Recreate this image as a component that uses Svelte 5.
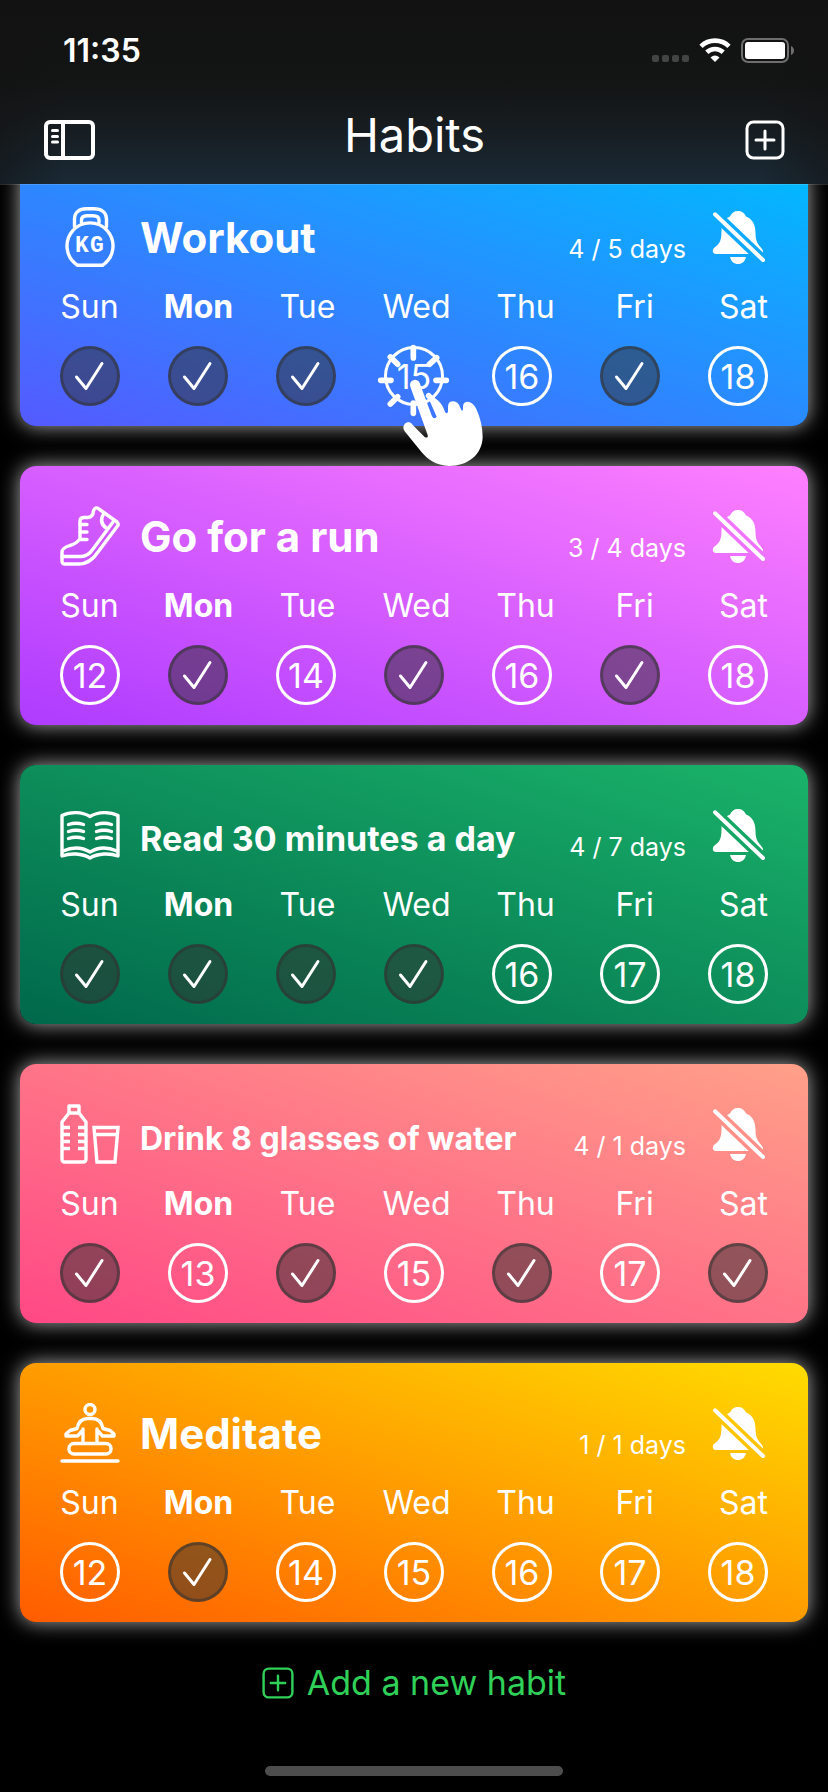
<script>
  const days = ['Sun', 'Mon', 'Tue', 'Wed', 'Thu', 'Fri', 'Sat'];
  const firstDate = 12;
  const today = 1;

  let habits = $state([
    { id: 'workout', name: 'Workout', size: 'large', count: '4 / 5 days', done: [true, true, true, false, false, true, false] },
    { id: 'run', name: 'Go for a run', size: 'large', count: '3 / 4 days', done: [false, true, false, true, false, true, false] },
    { id: 'read', name: 'Read 30 minutes a day', size: 'medium', count: '4 / 7 days', done: [true, true, true, true, false, false, false] },
    { id: 'water', name: 'Drink 8 glasses of water', size: 'small', count: '4 / 1 days', done: [true, false, true, false, true, false, true] },
    { id: 'meditate', name: 'Meditate', size: 'large', count: '1 / 1 days', done: [false, true, false, false, false, false, false] }
  ]);
</script>

{#snippet habitIcon(id)}
  <svg class="icon line" viewBox="0 0 60 60" aria-hidden="true">
    {#if id === 'workout'}
      <path d="M17.5 58.200A23 23 0 1 1 42.5 58.200Z" />
      <path d="M14.500 20V12C14.500 5 20 1.800 26 1.800H34C41 1.800 46.500 5 46.500 12V20" />
      <path d="M21.500 15.500V13C21.500 10 24 8.700 27 8.700H33C37 8.700 39 10 39 13V15.500" />
      <text x="15" y="45">K</text>
      <text x="30" y="45">G</text>
    {:else if id === 'run'}
      <path d="M39 3L57 16Q59 18 57.500 20L38 46Q30 58 19 58H5Q2 58 2 55V46Q2 42 10 39.500Q16 38 20 33V15Q20 11.500 24 11.500H28Q33 11 33.500 5Q35 0 39 3Z" />
      <path d="M53 16L33 43Q28 50.500 21 50.500H2M44 7Q38 17 47 22.500M20 18.500H27M20 26H27M20 33.500H27" />
    {:else if id === 'read'}
      <path d="M2 10.500C10 6.500 22 6.500 30 11.500C38 6.500 50 6.500 58 10.500V51C50 48 38 48 30 53C22 48 10 48 2 51Z" />
      <path d="M3 46C12 42 22 42 30 47C38 42 48 42 57 46" />
      <path d="M8.500 19.500Q16 17 23.500 19.500M8.500 26.500Q16 24 23.500 26.500M8.500 33.500Q16 31 23.500 33.500M36.500 19.500Q44 17 51.500 19.500M36.500 26.500Q44 24 51.500 26.500M36.500 33.500Q44 31 51.500 33.500" />
    {:else if id === 'water'}
      <path d="M9 9V2H19V9L26 18V55Q26 58 23 58H5Q2 58 2 55V18L9 9H19" />
      <path class="flat" d="M1 23.500H10M1 30.500H10M1 37.500H10M1 44.500H10M18 23.500H27M18 30.500H27M18 37.500H27M18 44.500H27" />
      <path class="flat" d="M34 23.500H58L55 58H37ZM35 30.500H57" />
    {:else}
      <circle cx="30" cy="6.500" r="5" />
      <path d="M23 26V39M37 26V39M22 28L17.500 33H6V31L10 27.500L17 25.500Q19 15.500 28 15.500H32Q41 15.500 43 25.500L50 27.500L54 31V33H42.500L38 28" />
      <rect x="9" y="40.500" width="42" height="10.500" rx="5" />
      <path d="M2 58H58" />
    {/if}
  </svg>
{/snippet}

{#snippet plusBox(cls)}
  <svg class={cls} viewBox="0 0 40 40" aria-hidden="true">
    <rect x="2" y="2" width="36" height="36" rx="6.500" />
    <path d="M20 11V29M11 20H29" />
  </svg>
{/snippet}

<div class="page">
  <header>
    <div class="status">
      <time>11:35</time>
      <div class="signals">
        <span class="dots"><i></i><i></i><i></i><i></i></span>
        <svg class="wifi" viewBox="0 0 32 24" aria-label="Wi-Fi" role="img">
          <path d="M2 8.300A20 20 0 0 1 30 8.300M7.800 14.200A12 12 0 0 1 24.200 14.200" fill="none" stroke="#fff" stroke-width="4.600" />
          <path d="M16 24L11.500 19.500Q16 15.500 20.500 19.500Z" fill="#fff" />
        </svg>
        <svg class="battery" viewBox="0 0 54 26" aria-label="Battery full" role="img">
          <rect x="1" y="1" width="46" height="23" rx="6" fill="none" stroke="#6e6e6f" stroke-width="2" />
          <rect x="4" y="4" width="40" height="17" rx="3" fill="#fff" />
          <path d="M50 8V17Q53 15.500 53 12.500Q53 9.500 50 8Z" fill="#6e6e6f" />
        </svg>
      </div>
    </div>
    <nav>
      <button class="bare" aria-label="Toggle sidebar">
        <svg class="sidebar" viewBox="0 0 52 40" aria-hidden="true">
          <rect x="2" y="2" width="47" height="36" rx="4" stroke-width="4" />
          <path d="M19 2V38" stroke-width="4" />
          <path d="M8.500 10.500H13.500M8.500 16.500H13.500M8.500 22H13.500" stroke-width="3" stroke-linecap="round" />
        </svg>
      </button>
      <h1>Habits</h1>
      <button class="bare end" aria-label="New habit">{@render plusBox('plus')}</button>
    </nav>
  </header>

  <main>
    {#each habits as habit, h}
      <article class={habit.id}>
        <div class="head">
          {@render habitIcon(habit.id)}
          <h2><span class={habit.size}>{habit.name}</span></h2>
          <p>{habit.count}</p>
          <button class="bare" aria-label="Reminders off">
            <svg class="icon" viewBox="0 0 60 60" aria-hidden="true">
              <mask id="cut-{h}">
                <rect width="60" height="60" fill="#fff" />
                <path d="M-4 -3.200L64 61.600" stroke="#000" stroke-width="11" />
              </mask>
              <g fill="#fff" mask="url(#cut-{h})">
                <path d="M30 4C34 4 36.500 6 38 9.500C44 12 47.500 17 47.500 26C47.500 36 51 38 54 42C56 45 55 47 53 47H8C4.500 47 4 43 6 41C11 37 13.500 35 13.500 24C13.500 16 16 12 22 9.500C23.500 6 26 4 30 4Z" />
              </g>
              <path d="M22 50H38C37 54.500 34 57 30 57S23 54.500 22 50Z" fill="#fff" />
              <path d="M7 7.300L55 53" stroke="#fff" stroke-width="4" stroke-linecap="round" />
            </svg>
          </button>
        </div>
        <div class="names">
          {#each days as day, d}
            <span class:today={d === today}>{day}</span>
          {/each}
        </div>
        <div class="dates">
          {#each habit.done as done, d}
            <div class="slot">
              <button
                class="date"
                class:done
                aria-pressed={done}
                aria-label="{habit.name}, {days[d]} {firstDate + d}"
                onclick={() => (habit.done[d] = !habit.done[d])}
              >
                {#if done}
                  <svg class="tick" viewBox="0 0 60 60" aria-hidden="true">
                    <path d="M16.500 31L26 42.500L42 17.500" />
                  </svg>
                {:else}
                  {firstDate + d}
                {/if}
              </button>
              {#if h === 0 && d === 3}
                <svg class="hand" viewBox="51 495 324 369" aria-hidden="true">
                  <path class="rays" d="M160 506V537M62 604H93M228 604H259M91 534L113 556M230 536L208 556M91 675L113 653M160 672V703M206 650L216 660" />
                  <path
                    d="M151 623A15 15 0 0 1 179 612L216 712Q222 723 230 713L205 656Q203 646 214 650Q238 664 247 680Q252 690 255 698Q260 707 264 698V683Q264 667 280 667Q294 668 299 682L304 693Q308 699 309 690V682Q309 668 324 668Q340 670 349 690Q368 732 368 775C366 829 322 861 268 861C226 859 203 841 185 820L134 757C124 741 136 729 147 729Q154 730 161 741Q180 760 194 774Q206 779 203 768Z"
                  />
                </svg>
              {/if}
            </div>
          {/each}
        </div>
      </article>
    {/each}
  </main>

  <button class="bare add">{@render plusBox('plus small-plus')}Add a new habit</button>
  <div class="home"></div>
</div>

<style>
  :global(body) {
    margin: 0;
    background: #000;
  }
  .page {
    display: flex;
    flex-direction: column;
    box-sizing: border-box;
    min-height: 100vh;
    padding-bottom: 16px;
    background: #000;
    color: #fff;
    font-family: Inter, 'Liberation Sans', sans-serif;
  }
  h1,
  h2,
  p {
    margin: 0;
  }
  svg {
    display: block;
  }
  .bare {
    display: flex;
    padding: 0;
    border: 0;
    background: none;
    color: inherit;
    font: inherit;
  }
  header {
    position: sticky;
    top: 0;
    z-index: 3;
    box-sizing: border-box;
    height: 185px;
    border-bottom: 1px solid rgba(255, 255, 255, 0.15);
    background:
      linear-gradient(90deg, rgba(18, 18, 18, 0.5), rgba(18, 18, 18, 0) 8%, rgba(18, 18, 18, 0) 92%, rgba(18, 18, 18, 0.5)) padding-box,
      linear-gradient(#121212, #131414 80px, #161b1e 120px, #1a2a36 184px) padding-box;
    background-clip: padding-box;
  }
  .status {
    display: flex;
    justify-content: space-between;
    align-items: center;
    height: 100px;
    padding: 0 33px 0 63px;
  }
  time {
    font-size: 32px;
    font-weight: 600;
  }
  .signals {
    display: flex;
    align-items: flex-end;
    gap: 10px;
  }
  .dots {
    display: flex;
    gap: 3px;
  }
  .dots i {
    width: 7px;
    height: 7px;
    border-radius: 2px;
    background: #434444;
  }
  .wifi {
    width: 32px;
    height: 24px;
  }
  .battery {
    width: 54px;
    height: 26px;
    margin-bottom: -2px;
  }
  nav {
    display: grid;
    grid-template-columns: 1fr auto 1fr;
    align-items: center;
    height: 80px;
    padding: 0 43px 0 44px;
  }
  h1 {
    margin-bottom: 10px;
    font-size: 47px;
    line-height: 60px;
    font-weight: 400;
  }
  .end {
    justify-self: end;
  }
  .sidebar {
    width: 52px;
    height: 40px;
    fill: none;
    stroke: #fff;
  }
  .plus {
    width: 40px;
    height: 40px;
    fill: none;
    stroke: currentColor;
    stroke-width: 3;
    stroke-linecap: round;
  }
  main {
    display: flex;
    flex-direction: column;
    gap: 40px;
    margin-top: -18px;
    padding: 0 20px;
  }
  article {
    border-radius: 16px;
    padding: 40px 0 20px;
    box-shadow: 0 0 20px rgba(255, 255, 255, 0.68);
  }
  .workout {
    position: relative;
    z-index: 2;
    background: linear-gradient(to bottom left, #00baff, #555aff);
  }
  .run {
    background: linear-gradient(to bottom left, #ff80ff, #ae3bff);
  }
  .read {
    background: linear-gradient(to bottom left, #1ab36a, #00684b);
  }
  .water {
    background: linear-gradient(to bottom left, #ffa089, #ff4886);
  }
  .meditate {
    background: linear-gradient(to bottom left, #ffdc00, #ff5c00);
  }
  .head {
    display: flex;
    align-items: flex-end;
    padding: 0 40px;
  }
  .icon {
    width: 60px;
    height: 60px;
    flex: none;
  }
  .line {
    fill: none;
    stroke: #fff;
    stroke-width: 3.4;
    stroke-linecap: round;
    stroke-linejoin: round;
  }
  .line .flat {
    stroke-linecap: butt;
    stroke-linejoin: miter;
  }
  .line text {
    fill: #fff;
    stroke: none;
    font: 700 23px 'Liberation Mono', monospace;
  }
  h2 {
    flex: 1;
    padding-left: 20px;
    font-size: 42px;
    line-height: 62px;
    font-weight: 700;
    white-space: nowrap;
  }
  h2 span {
    line-height: 1;
  }
  .head h2 {
    margin-bottom: -2px;
  }
  .medium {
    font-size: 34px;
  }
  .small {
    font-size: 32px;
  }
  p {
    margin-right: 22px;
    font-size: 25px;
    line-height: 36px;
  }
  .names {
    display: grid;
    grid-template-columns: repeat(7, 1fr);
    margin-top: 20px;
    padding: 0 10px 0 15px;
    font-size: 32px;
    line-height: 40px;
    text-align: center;
  }
  .today {
    font-weight: 700;
  }
  .dates {
    display: flex;
    justify-content: space-between;
    margin-top: 19px;
    padding: 0 40px;
  }
  .slot {
    position: relative;
  }
  .date {
    display: flex;
    align-items: center;
    justify-content: center;
    box-sizing: border-box;
    width: 60px;
    height: 60px;
    padding: 0;
    border: 3px solid #fff;
    border-radius: 50%;
    background: none;
    color: #fff;
    font: 400 34px Inter, 'Liberation Sans', sans-serif;
  }
  .done {
    border-color: rgba(49, 49, 49, 0.53);
    background: rgba(49, 49, 49, 0.53);
  }
  .tick {
    width: 60px;
    height: 60px;
    flex: none;
    fill: none;
    stroke: #fff;
    stroke-width: 3;
    stroke-linecap: round;
    stroke-linejoin: round;
  }
  .hand {
    position: absolute;
    left: -7px;
    top: -2px;
    width: 108px;
    height: 123px;
    fill: #fff;
    pointer-events: none;
  }
  .rays {
    fill: none;
    stroke: #fff;
    stroke-width: 17;
    stroke-linecap: round;
  }
  .add {
    align-self: center;
    align-items: center;
    gap: 13px;
    margin: 41px 0 40px;
    color: #30d158;
    font-size: 34px;
    line-height: 40px;
  }
  .small-plus {
    width: 32px;
    height: 32px;
  }
  .home {
    align-self: center;
    width: 36%;
    height: 10px;
    margin-top: auto;
    border-radius: 5px;
    background: #4d4d4d;
  }
</style>
